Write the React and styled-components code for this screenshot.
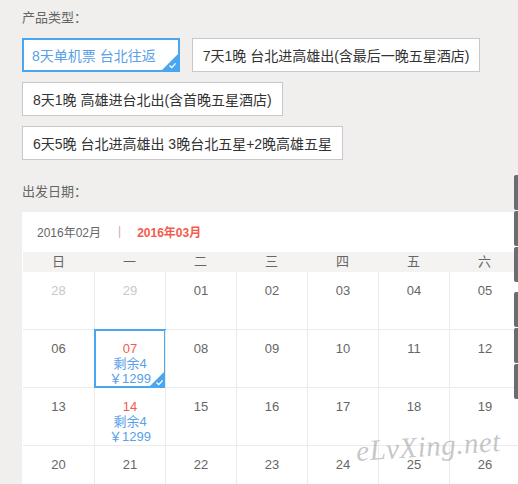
import React from "react";
import styled, { createGlobalStyle } from "styled-components";

const Global = createGlobalStyle`
  html, body {
    margin: 0;
    height: 100%;
    overflow: hidden;
    background: #f0efed;
  }
  body {
    font-family: "Liberation Sans", "Noto Sans CJK SC", sans-serif;
    color: #666;
  }
`;

const options = [
  "8天单机票 台北往返",
  "7天1晚 台北进高雄出(含最后一晚五星酒店)",
  "8天1晚 高雄进台北出(含首晚五星酒店)",
  "6天5晚 台北进高雄出 3晚台北五星+2晚高雄五星",
];

const weekDays = ["日", "一", "二", "三", "四", "五", "六"];

const weeks = [
  [{ d: "28", dim: true }, { d: "29", dim: true }, { d: "01" }, { d: "02" }, { d: "03" }, { d: "04" }, { d: "05" }],
  [{ d: "06" }, { d: "07", stock: "剩余4", price: "￥1299", selected: true }, { d: "08" }, { d: "09" }, { d: "10" }, { d: "11" }, { d: "12" }],
  [{ d: "13" }, { d: "14", stock: "剩余4", price: "￥1299" }, { d: "15" }, { d: "16" }, { d: "17" }, { d: "18" }, { d: "19" }],
  [{ d: "20" }, { d: "21" }, { d: "22" }, { d: "23" }, { d: "24" }, { d: "25" }, { d: "26" }],
];

function Corner() {
  return (
    <CornerMark viewBox="0 0 16 16">
      <polygon points="16,0 16,16 0,16" fill="#4aa6ee" />
      <path d="M7.5 11.5 L9.8 13.6 L13.6 9.4" stroke="#fff" strokeWidth="1.4" fill="none" />
    </CornerMark>
  );
}

export default function App() {
  return (
    <Page>
      <Global />
      <Label>产品类型：</Label>
      <Options>
        {options.map((o, i) => (
          <Option key={o} selected={i === 0}>
            {o}
            {i === 0 && <Corner />}
          </Option>
        ))}
      </Options>
      <Label style={{ marginTop: 22 }}>出发日期：</Label>
      <Calendar>
        <MonthBar>
          <Month>2016年02月</Month>
          <Sep>|</Sep>
          <Month active>2016年03月</Month>
        </MonthBar>
        <WeekHead>
          {weekDays.map((w) => (
            <span key={w}>{w}</span>
          ))}
        </WeekHead>
        <Grid>
          {weeks.flat().map((c, i) => (
            <Day key={i} first={i % 7 === 0} selected={c.selected}>
              <DayNum dim={c.dim} hot={!!c.stock}>
                {c.d}
              </DayNum>
              {c.stock && <Info>{c.stock}</Info>}
              {c.price && <Info>{c.price}</Info>}
              {c.selected && <Corner />}
            </Day>
          ))}
        </Grid>
      </Calendar>
      <Watermark>eLvXing.net</Watermark>
      <SideBar>
        <SideGroup>
          <SideItem />
          <SideItem />
          <SideItem />
        </SideGroup>
        <SideGroup>
          <SideItem />
          <SideItem />
          <SideItem />
        </SideGroup>
      </SideBar>
    </Page>
  );
}

const Page = styled.div`
  position: relative;
  width: 518px;
  height: 484px;
  overflow: hidden;
  padding: 8px 0 0 22px;
  box-sizing: border-box;
`;

const Label = styled.div`
  font-size: 13px;
  line-height: 20px;
  color: #666;
`;

const Options = styled.div`
  margin-top: 10px;
  width: 496px;
  display: flex;
  flex-wrap: wrap;
  gap: 10px 12px;
`;

const Option = styled.div`
  position: relative;
  height: 34px;
  box-sizing: border-box;
  display: flex;
  align-items: center;
  background: #fff;
  font-size: 14px;
  white-space: nowrap;
  border: ${(p) => (p.selected ? "2px solid #4aa6ee" : "1px solid #c8c8c8")};
  padding: ${(p) => (p.selected ? "0 22px 0 8px" : "0 10px")};
  color: ${(p) => (p.selected ? "#5aa0e8" : "#333")};
`;

const CornerMark = styled.svg`
  position: absolute;
  right: 0;
  bottom: 0;
  width: 16px;
  height: 16px;
`;

const Calendar = styled.div`
  margin-top: 10px;
  width: 510px;
  background: #fff;
  padding: 0 0 0 1px;
`;

const MonthBar = styled.div`
  height: 38px;
  padding: 0 0 2px 14px;
  display: flex;
  align-items: center;
  font-size: 12px;
`;

const Month = styled.span`
  color: ${(p) => (p.active ? "#f55a4e" : "#666")};
  font-weight: ${(p) => (p.active ? "bold" : "normal")};
`;

const Sep = styled.span`
  margin: 0 16px 0 17px;
  color: #d9a0b4;
`;

const WeekHead = styled.div`
  display: grid;
  grid-template-columns: repeat(7, 71px);
  height: 20px;
  background: #f4f3f1;
  font-size: 13px;
  color: #666;
  span {
    text-align: center;
    line-height: 20px;
  }
`;

const Grid = styled.div`
  display: grid;
  grid-template-columns: repeat(7, 71px);
`;

const Day = styled.div`
  position: relative;
  height: 58px;
  box-sizing: border-box;
  padding-top: 11px;
  text-align: center;
  font-size: 13px;
  line-height: 15px;
  border-bottom: 1px solid #ebebeb;
  border-left: ${(p) => (p.first ? "none" : "1px solid #ebebeb")};
  ${(p) =>
    p.selected &&
    `
    &::after {
      content: "";
      position: absolute;
      inset: -1px;
      border: 2px solid #4aa6ee;
    }
  `}
`;

const DayNum = styled.div`
  color: ${(p) => (p.dim ? "#c8c8c8" : p.hot ? "#f55a4e" : "#666")};
`;

const Info = styled.div`
  color: #5aa0e8;
`;

const Watermark = styled.div`
  position: absolute;
  left: 356px;
  top: 430px;
  font-family: "Liberation Serif", serif;
  font-style: italic;
  font-size: 29px;
  letter-spacing: 0.5px;
  color: rgba(150, 150, 150, 0.55);
  transform: rotate(-4deg);
  pointer-events: none;
`;

const SideBar = styled.div`
  position: fixed;
  right: 0;
  top: 175px;
  display: flex;
  flex-direction: column;
  gap: 10px;
`;

const SideGroup = styled.div`
  display: flex;
  flex-direction: column;
  gap: 1px;
`;

const SideItem = styled.div`
  width: 4px;
  height: 35px;
  background: #6b6c70;
  border-radius: 2px 0 0 2px;
`;
